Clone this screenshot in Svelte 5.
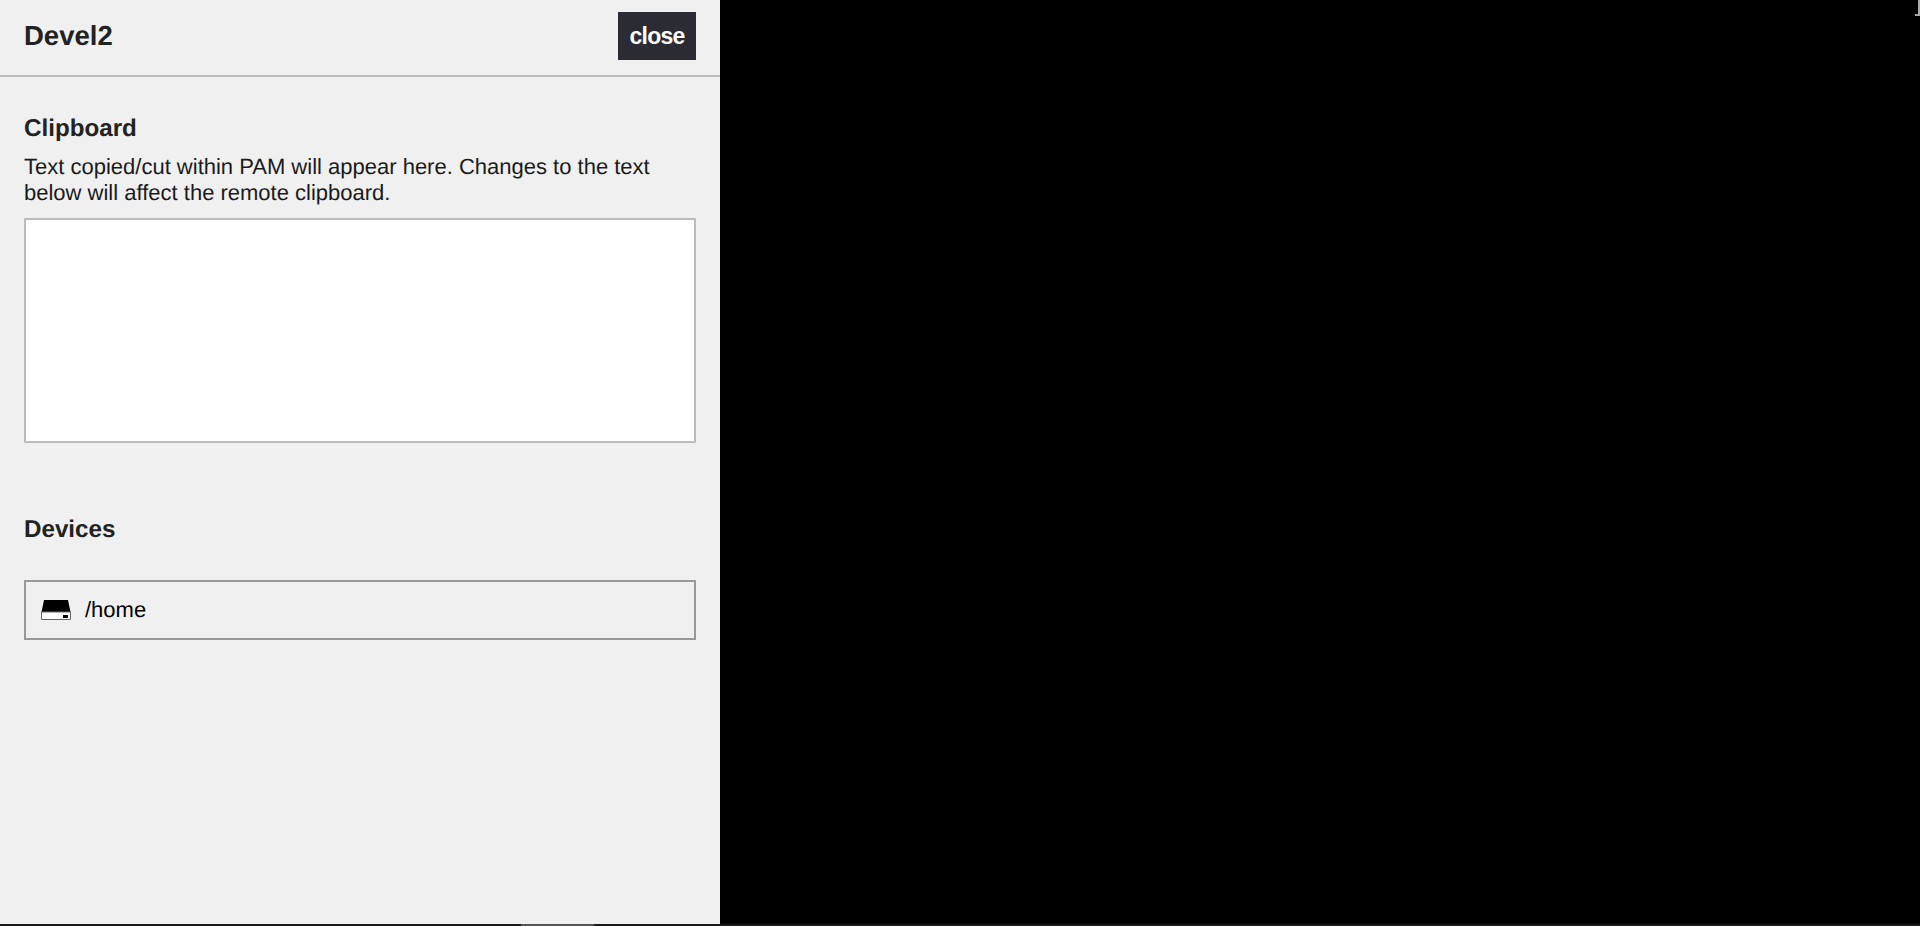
<script>
  let clipboard = $state('');
  const devices = [{ name: '/home' }];
</script>

<div class="screen">
  <aside class="menu">
    <header class="menu-header">
      <h2>Devel2</h2>
      <button class="close">close</button>
    </header>
    <div class="menu-body">
      <section class="clipboard">
        <h3>Clipboard</h3>
        <p>Text copied/cut within PAM will appear here. Changes to the text below will affect the remote clipboard.</p>
        <textarea bind:value={clipboard}></textarea>
      </section>
      <section class="devices">
        <h3>Devices</h3>
        <div class="device-list">
          {#each devices as device}
            <div class="device">
              <svg class="drive" viewBox="0 0 30 20" width="30" height="20">
                <path d="M3 0 H27 L29.5 12 H0.5 Z" fill="#000" />
                <path d="M0.5 12 H29.5 V19.5 H0.5 Z" fill="#fff" stroke="#666" />
                <rect x="22" y="15" width="5" height="3" fill="#000" />
              </svg>
              <span>{device.name}</span>
            </div>
          {/each}
        </div>
      </section>
    </div>
  </aside>
  <div class="main">
    <div class="corner"></div>
  </div>
  <div class="progress"><div class="thumb"></div></div>
</div>

<style>
  :global(body) { margin: 0; background: #000; font-family: "Liberation Sans", Arial, sans-serif; }
  .screen { height: 926px; position: relative; display: flex; overflow: hidden; background: #000; }
  .menu { width: 720px; height: 924px; background: #f0f0f0; color: #1a1a1a; flex: none; display: flex; flex-direction: column; text-rendering: geometricPrecision; }
  .menu-header { height: 51px; border-bottom: 2px solid #bbb; padding: 12px 24px; display: flex; justify-content: space-between; align-items: flex-start; }
  h2 { margin: 0; font-size: 27.5px; font-weight: bold; line-height: 48px; color: #222; }
  h3 { margin: 0 0 -2px; font-size: 24.2px; font-weight: bold; line-height: 32px; color: #222; }
  .close { width: 78px; height: 48px; border: 0; background: #2b2b33; color: #fff; font: bold 23px "Liberation Sans", Arial, sans-serif; letter-spacing: -0.8px; padding: 0; }
  .menu-body { padding: 36px 24px 0; display: flex; flex-direction: column; }
  p { margin: 11px 0 12px; font-size: 22px; line-height: 26px; }
  textarea { display: block; width: 100%; height: 225px; box-sizing: border-box; border: 2px solid #bbb; background: #fff; padding: 0; margin: 0; resize: none; outline: none; }
  .devices { margin-top: 71px; }
  .device-list { margin-top: 36px; }
  .device { height: 60px; box-sizing: border-box; border: 2px solid #999; padding: 0 15px; display: flex; align-items: center; gap: 14px; font-size: 22px; color: #000; }
  .drive { flex: none; }
  .main { flex: 1; position: relative; }
  .corner { position: absolute; top: 0; right: 0; width: 5px; height: 16px; border-right: 2px solid #aaa; border-bottom: 2px solid #aaa; box-sizing: border-box; }
  .progress { position: absolute; left: 0; bottom: 0; width: 100%; height: 2px; background: #1a1a1a; }
  .thumb { position: absolute; left: 521px; width: 73px; height: 2px; background: #555; }
</style>
